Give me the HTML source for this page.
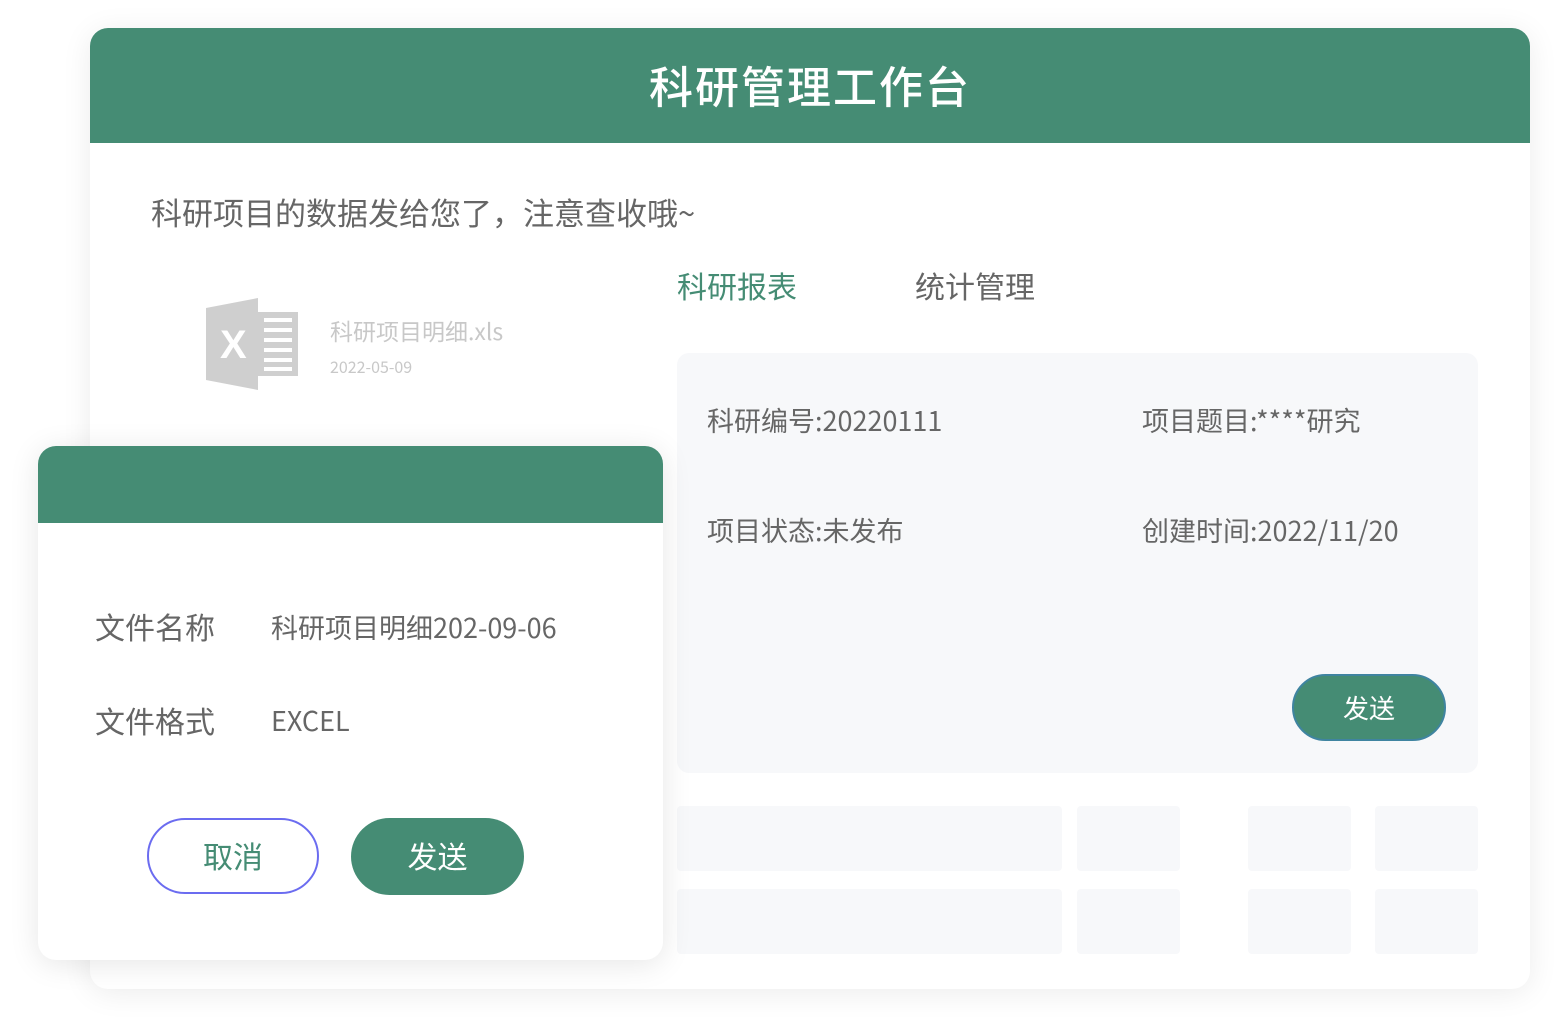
<!DOCTYPE html>
<html><head><meta charset="utf-8"><style>
*{margin:0;padding:0;box-sizing:border-box}
body{width:1568px;height:1032px;background:#fff;position:relative;overflow:hidden;font-family:"Noto Sans CJK SC","Liberation Sans",sans-serif}
.a{position:absolute}
.main{left:90px;top:28px;width:1440px;height:961px;background:#fff;border-radius:18px;box-shadow:0 4px 30px rgba(0,0,0,.08);overflow:hidden}
.hdr{left:0;top:0;width:1440px;height:115px;background:#458c74;color:#fff;font-size:44px;text-align:center;line-height:112px;letter-spacing:2px;font-weight:500}
.t{white-space:nowrap;line-height:1.15}
.panel{left:677px;top:353px;width:801px;height:420px;background:#f7f8fa;border-radius:12px}
.g{background:#f7f8fa;border-radius:4px}
.btn{border-radius:36px;text-align:center;color:#fff;background:#458c74}
</style></head><body>
<div class="a main"><div class="a hdr">科研管理工作台</div></div>
<div class="a t" style="left:151px;top:194px;font-size:31px;color:#666">科研项目的数据发给您了，注意查收哦~</div>
<svg class="a" style="left:206px;top:298px" width="92" height="92" viewBox="0 0 92 92">
<polygon points="0,10 52,0 52,92 0,82" fill="#cfcfcf"/>
<rect x="52" y="14" width="40" height="64" fill="#cfcfcf"/>
<g fill="#fff"><rect x="58" y="20" width="28" height="4"/><rect x="58" y="30" width="28" height="4"/><rect x="58" y="40" width="28" height="4"/><rect x="58" y="50" width="28" height="4"/><rect x="58" y="60" width="28" height="4"/><rect x="58" y="69" width="28" height="4"/></g>
<text x="14" y="60" font-size="40" font-weight="bold" fill="#fff" font-family="Liberation Sans">X</text>
</svg>
<div class="a t" style="left:330px;top:317px;font-size:23px;color:#c8c8c8">科研项目明细.xls</div>
<div class="a t" style="left:330px;top:357px;font-size:16px;color:#c8c8c8">2022-05-09</div>
<div class="a t" style="left:677px;top:268px;font-size:30px;color:#458c74">科研报表</div>
<div class="a t" style="left:915px;top:268px;font-size:30px;color:#666">统计管理</div>
<div class="a panel"></div>
<div class="a t" style="left:707px;top:404px;font-size:27px;color:#666">科研编号:20220111</div>
<div class="a t" style="left:1142px;top:404px;font-size:27px;color:#666">项目题目:****研究</div>
<div class="a t" style="left:707px;top:514px;font-size:27px;color:#666">项目状态:未发布</div>
<div class="a t" style="left:1142px;top:514px;font-size:27px;color:#666">创建时间:2022/11/20</div>
<div class="a btn" style="left:1292px;top:674px;width:154px;height:67px;line-height:63px;font-size:26px;border:2px solid #3f84a0">发送</div>
<div class="a g" style="left:677px;top:806px;width:385px;height:65px"></div>
<div class="a g" style="left:1077px;top:806px;width:103px;height:65px"></div>
<div class="a g" style="left:1248px;top:806px;width:103px;height:65px"></div>
<div class="a g" style="left:1375px;top:806px;width:103px;height:65px"></div>
<div class="a g" style="left:677px;top:889px;width:385px;height:65px"></div>
<div class="a g" style="left:1077px;top:889px;width:103px;height:65px"></div>
<div class="a g" style="left:1248px;top:889px;width:103px;height:65px"></div>
<div class="a g" style="left:1375px;top:889px;width:103px;height:65px"></div>
<div class="a" style="left:38px;top:446px;width:625px;height:514px;background:#fff;border-radius:18px;box-shadow:0 4px 30px rgba(0,0,0,.1);overflow:hidden">
<div class="a" style="left:0;top:0;width:625px;height:77px;background:#458c74"></div></div>
<div class="a t" style="left:95px;top:609px;font-size:30px;color:#666">文件名称</div>
<div class="a t" style="left:271px;top:611px;font-size:27px;color:#666">科研项目明细202-09-06</div>
<div class="a t" style="left:95px;top:703px;font-size:30px;color:#666">文件格式</div>
<div class="a t" style="left:271px;top:704px;font-size:27px;color:#666">EXCEL</div>
<div class="a" style="left:147px;top:818px;width:172px;height:76px;border:2px solid #6b6cf0;border-radius:38px;text-align:center;line-height:70px;font-size:30px;color:#458c74">取消</div>
<div class="a btn" style="left:351px;top:818px;width:173px;height:77px;line-height:74px;font-size:30px;border-radius:39px">发送</div>
</body></html>
